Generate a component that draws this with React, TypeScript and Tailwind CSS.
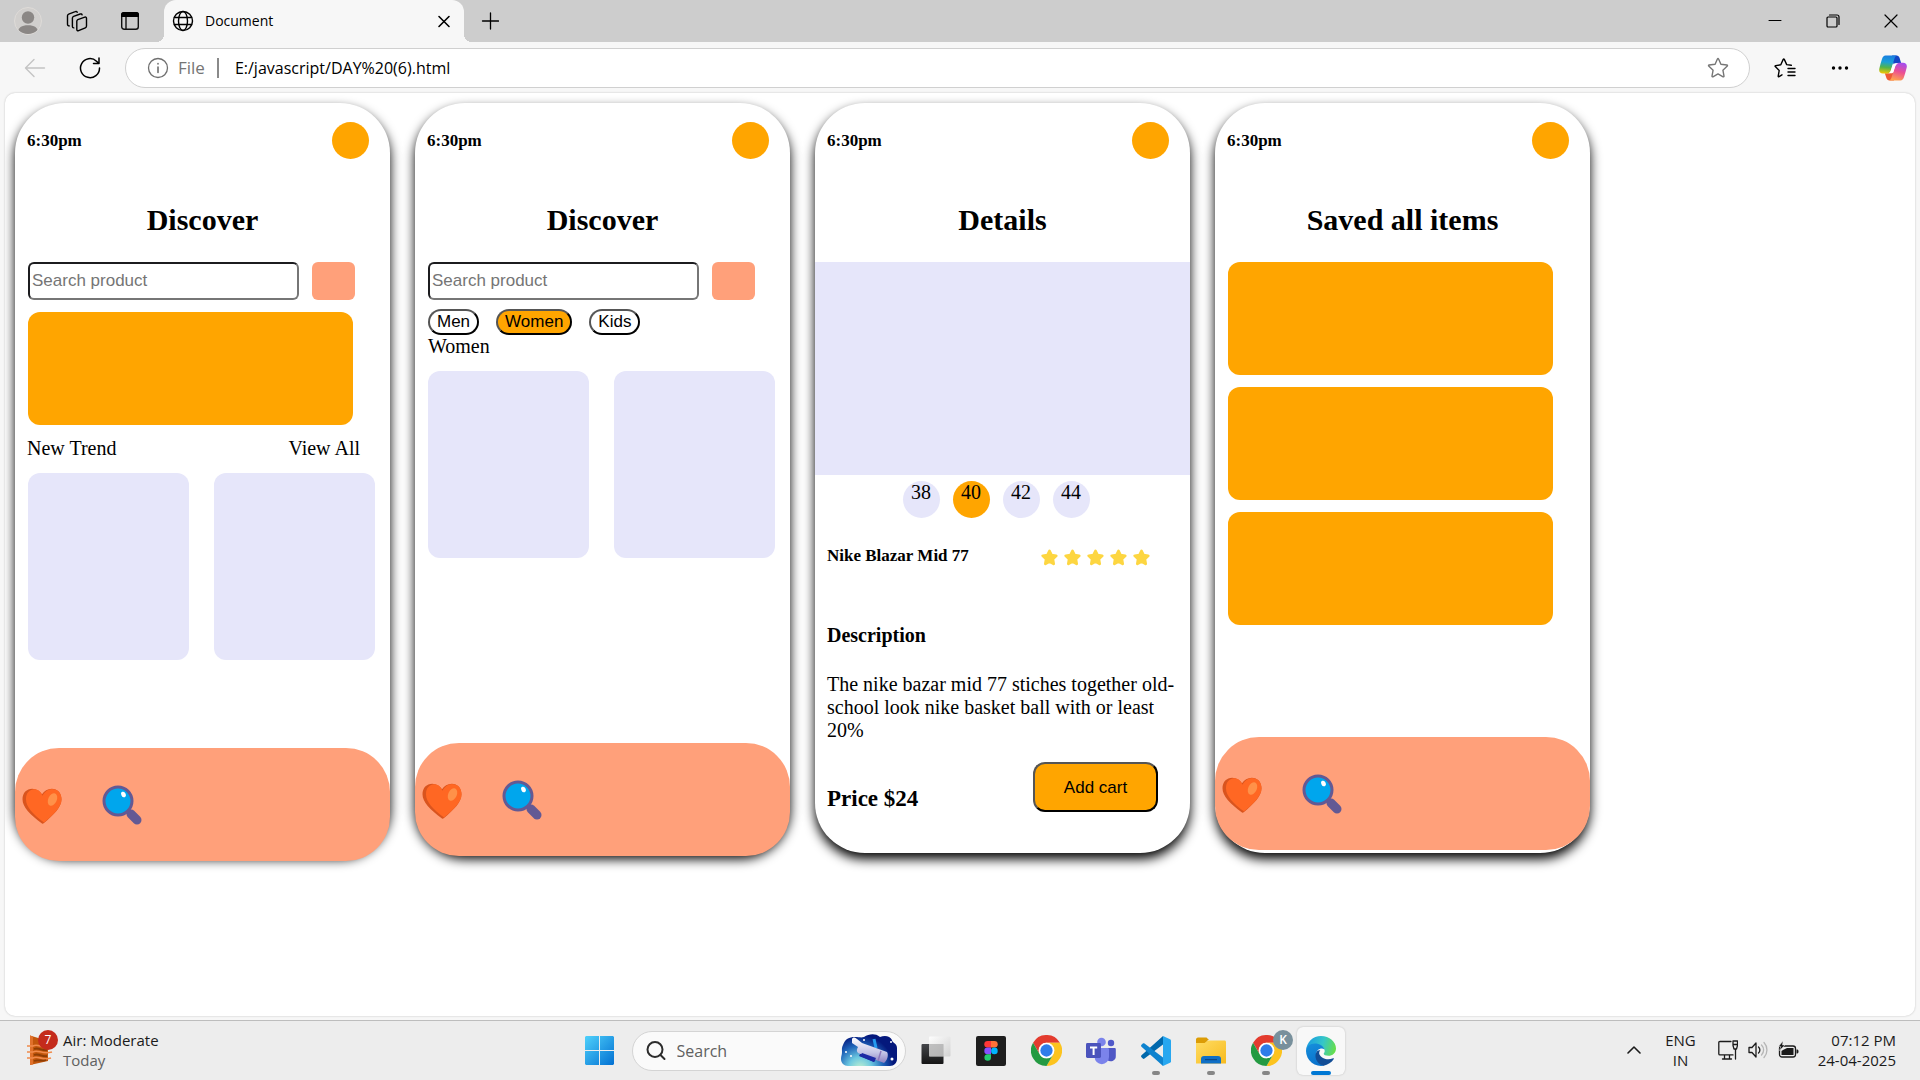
import React from "react";

const UI = "font-['Open_Sans',sans-serif]";

/* ---------- browser icons ---------- */

const stroke = { fill: "none", stroke: "currentColor", strokeLinecap: "round", strokeLinejoin: "round" } as const;

function Avatar() {
  return (
    <svg viewBox="0 0 28 28" className="size-7">
      <defs>
        <clipPath id="avatarClip"><circle cx="14" cy="14" r="13" /></clipPath>
      </defs>
      <circle cx="14" cy="14" r="13.5" fill="#d1cfcd" stroke="#dedbd8" />
      <g clipPath="url(#avatarClip)" fill="#8b8785">
        <circle cx="14" cy="10.5" r="6.2" />
        <path d="M3.8 26c0-5.500 4-7.800 10.200-7.800s10.200 2.300 10.200 7.800v3H3.800z" />
      </g>
    </svg>
  );
}

function Workspaces() {
  return (
    <svg viewBox="0 0 22 22" className="size-[22px]" {...stroke} strokeWidth="1.4">
      <path d="M11.800 8.600l7-2.400c1.100-.4 1.700.1 1.700 1.100v7.700c0 .9-.4 1.500-1.200 1.800l-6.700 2.800c-1.100.4-1.800 0-1.800-1.100v-8.200c0-.9.300-1.400 1-1.700z" transform="translate(0 1)" />
      <path d="M7.800 17.900c-.9 0-1.400-.4-1.400-1.400V8.100c0-.9.400-1.400 1.200-1.700l6.600-2.400c.9-.3 1.700 0 1.900.8" />
      <path d="M3.300 15.900c-1.100 0-1.800-.5-1.800-1.600V5.800c0-.9.400-1.400 1.200-1.700l6.500-2.400c1-.4 1.700-.1 2 .6" />
    </svg>
  );
}

function TabActions() {
  return (
    <svg viewBox="0 0 20 20" className="size-5">
      <rect x="1.700" y="1.700" width="16.600" height="16.600" rx="2.500" fill="none" stroke="#111" strokeWidth="1.400" />
      <path d="M1 6V3.500A2.500 2.500 0 0 1 3.500 1h13A2.500 2.500 0 0 1 19 3.500V6z" fill="#000" />
      <path d="M6 6v12" stroke="#111" strokeWidth="1.400" />
    </svg>
  );
}

function Globe() {
  return (
    <svg viewBox="0 0 22 22" className="size-[22px]" {...stroke} strokeWidth="1.400">
      <circle cx="11" cy="11" r="9.500" />
      <ellipse cx="11" cy="11" rx="4.500" ry="9.500" />
      <path d="M2.500 7.500h17M2.500 14.500h17" />
    </svg>
  );
}

function StarOutline({ lines = false }: { lines?: boolean }) {
  return (
    <svg viewBox="0 0 22 22" className="size-[22px]" {...stroke} strokeWidth="1.400">
      {lines ? (
        <>
          <path d="M8 17.800l-3 1.900c-.5.300-.9 0-.8-.6l1-5.600-3.900-3.900c-.4-.4-.2-.9.300-1l5.200-.8L9.200 2.400c.3-.5.900-.5 1.100 0l2.400 5.200 4.600.7" />
          <path d="M14 11.500h7M14 15h7M14 18.500h7" />
        </>
      ) : (
        <path d="M10.500 1.800c.2-.5.800-.5 1 0l2.400 5.400 6 .8c.6.100.8.700.4 1.100l-4.400 4.100 1.100 5.900c.1.600-.4.900-.9.700L11 16.900l-5.100 2.900c-.5.200-1-.1-.9-.7l1.100-5.900L1.700 9.100c-.4-.4-.2-1 .4-1.100l6-.8z" />
      )}
    </svg>
  );
}

function Copilot() {
  return (
    <svg viewBox="0 0 28 26" className="h-[26px] w-7">
      <defs>
        <linearGradient id="cpA" x1="0.300" y1="0" x2="0.200" y2="1">
          <stop offset="0" stopColor="#1a7fe0" /><stop offset=".35" stopColor="#1aa0d8" />
          <stop offset=".65" stopColor="#52b44b" /><stop offset="1" stopColor="#f8c700" />
        </linearGradient>
        <linearGradient id="cpB" x1="0.700" y1="0" x2="0.400" y2="1">
          <stop offset="0" stopColor="#a34df0" /><stop offset=".5" stopColor="#ec4f93" /><stop offset="1" stopColor="#ffa34d" />
        </linearGradient>
      </defs>
      <path d="M13 .5h4.500c1.700 0 2.600 1 3.100 2.500l1.600 5.200h-4c-2 0-3 .9-3.600 2.600z" fill="#1346c4" />
      <path d="M15 25.500h-4.500c-1.700 0-2.600-1-3.100-2.500l-1.600-4.800h4.400c2 0 3-.9 3.600-2.600z" fill="#ee5a35" />
      <path d="M6.500.5h11.800c-1.600.2-2.300 1.400-2.900 3.300l-3.600 11.600c-.6 2-1.800 3.100-4 3.100H4c-3 0-4.300-2-3.700-4.800C1 10.500 2 7 3 4 3.700 1.700 4.800.5 6.500.5z" fill="url(#cpA)" />
      <path d="M21.500 25.500H9.700c1.600-.2 2.300-1.400 2.900-3.300l3.600-11.400c.6-2 1.800-3.100 4-3.100H24c3 0 4.300 2 3.700 4.800-.7 3.200-1.700 6.500-2.700 9.500-.7 2.300-1.800 3.500-3.500 3.500z" fill="url(#cpB)" />
      <path d="M16.200 8.200h3.300c-1.700.5-2.700 1.600-3.300 3.400l-1.700 5.200c-.4 1-1.200 1.500-2.400 1.500H9.500c1.300-.5 2-1.400 2.400-2.700l1.700-5.300c.5-1.400 1.300-2.100 2.600-2.100z" fill="#fff" />
    </svg>
  );
}

/* ---------- content icons ---------- */

function Heart() {
  return (
    <svg viewBox="0 0 40 36" className="h-9 w-10">
      <path d="M20 35.500C8 26.500.5 19 .5 11.200.5 4.800 4.700.7 10.200.7c4.200 0 7.600 2.100 9.800 5.500C22.200 2.800 25.600.7 29.800.7c5.500 0 9.700 4.100 9.700 10.500C39.500 19 32 26.500 22 35c-.7.600-1.300.9-2 .5z" fill="#d9541e" />
      <path d="M22 34.500C11 26 4 19 4 11.200 4 5.200 7 1.700 12 1.200c3.800 0 6.500 2 8.600 6.500 2.100-3.900 5-6.500 9.400-6.700 5.500 0 9.500 3.900 9.500 10.200C39.500 19 32 26 22 34.500z" fill="#ff6723" />
      <ellipse cx="30.500" cy="11.500" rx="4.300" ry="6.500" transform="rotate(25 30.500 11.500)" fill="#ff9149" />
    </svg>
  );
}

function Magnifier() {
  return (
    <svg viewBox="0 0 40 40" className="size-10">
      <path d="M25.500 25.500l4 4" stroke="#635994" strokeWidth="4" />
      <path d="M29 29l6 6" stroke="#635994" strokeWidth="9" strokeLinecap="round" />
      <circle cx="16" cy="16" r="14" fill="#00a6ed" stroke="#635994" strokeWidth="3" />
      <ellipse cx="21.500" cy="9.500" rx="2.200" ry="2.900" transform="rotate(-25 21.500 9.500)" fill="#fff" />
    </svg>
  );
}

function RatingStar() {
  return (
    <svg viewBox="0 0 17 17" className="size-[17px]">
      <path d="M8.500 2l2 4.200 4.700.6-3.400 3.300.8 4.700-4.100-2.200-4.100 2.200.8-4.700L1.800 6.800l4.700-.6z" fill="#fdd641" stroke="#fdd641" strokeWidth="2.800" strokeLinejoin="round" />
    </svg>
  );
}

/* ---------- taskbar icons ---------- */

function WindowsLogo() {
  return (
    <svg viewBox="0 0 29 29" className="size-[29px]">
      <defs>
        <linearGradient id="win" gradientUnits="userSpaceOnUse" x1="0" y1="0" x2="29" y2="29">
          <stop offset="0" stopColor="#4fd1fb" /><stop offset="1" stopColor="#0270d2" />
        </linearGradient>
      </defs>
      <path d="M1 0h13v14H0V1zM15 0h13l1 1v13H15zM0 15h14v14H1l-1-1zM15 15h14v13l-1 1H15z" fill="url(#win)" />
    </svg>
  );
}

function SearchArt() {
  return (
    <svg viewBox="0 0 58 33" className="h-[33px] w-[58px]">
      <defs>
        <radialGradient id="sky" gradientUnits="userSpaceOnUse" cx="20" cy="35" r="34">
          <stop offset="0" stopColor="#c5f3cf" /><stop offset=".35" stopColor="#6cc8e0" />
          <stop offset=".7" stopColor="#1d62b8" /><stop offset="1" stopColor="#04187c" />
        </radialGradient>
        <linearGradient id="tube" x1="0" y1="0" x2="0" y2="1">
          <stop offset="0" stopColor="#fff" /><stop offset=".6" stopColor="#c3c4e6" /><stop offset="1" stopColor="#8c7fc0" />
        </linearGradient>
      </defs>
      <path d="M3 11C5 5 9 3 15 3c4 0 6 1 9 0 5-3 11-4 16 0 5-2 10-1 12 3 0 3 5 3 5 8v11c0 4-3 7-7 7H8c-4 0-7-3-7-7 0-3 1-4 1-7 0-2-.500-4 1-7z" fill="url(#sky)" />
      <path d="M21 18l16 6-3 4-15-6z" fill="#1a2a9c" />
      <path d="M34 5l2 9" stroke="#249bf0" strokeWidth="3" />
      <path d="M12 5c1-2 3-2 5 0l5 4 25 9c2 3 0 9-3 11l-26-10c-2-2-1-4 0-6l-6-4z" fill="url(#tube)" />
      <path d="M41 17l-3 10" stroke="#8d78bb" strokeWidth="1.500" />
      <path d="M22 19l14 5-2 4-14-6z" fill="#1d2aa5" />
      <g fill="#fff"><circle cx="6" cy="18" r="1" /><circle cx="24" cy="6" r="1" /><circle cx="51" cy="8" r="1" /><circle cx="52" cy="25" r="1.500" /><circle cx="11" cy="22" r="1" /></g>
    </svg>
  );
}

function TaskView() {
  return (
    <svg viewBox="0 0 30 29" className="h-[29px] w-[30px]">
      <defs>
        <linearGradient id="tvDark" x1="0" y1="0" x2="0" y2="1"><stop offset="0" stopColor="#44464a" /><stop offset="1" stopColor="#151515" /></linearGradient>
        <linearGradient id="tvLight" x1="0" y1="0" x2="1" y2="1"><stop offset="0" stopColor="#fff" /><stop offset="1" stopColor="#cfcfcf" /></linearGradient>
      </defs>
      <rect x="0.500" y="8" width="22" height="20" rx="1" fill="url(#tvDark)" />
      <rect x="8" y="0.500" width="21.500" height="20" rx="1" fill="url(#tvLight)" fillOpacity=".9" />
      <path d="M8 8h14.500v12.500H8z" fill="#a9a9a9" fillOpacity=".6" />
    </svg>
  );
}

function Figma() {
  return (
    <svg viewBox="0 0 30 30" className="size-[30px]">
      <rect width="30" height="30" rx="2" fill="#1e1e1e" />
      <path d="M15 5h-3.400a3.300 3.300 0 0 0 0 6.600H15z" fill="#ff3737" />
      <path d="M15 5h3.400a3.300 3.300 0 0 1 0 6.600H15z" fill="#ff7237" />
      <path d="M15 11.600h-3.400a3.300 3.300 0 0 0 0 6.600H15z" fill="#874fff" />
      <circle cx="18.400" cy="14.900" r="3.300" fill="#00b6ff" />
      <path d="M15 18.200h-3.400a3.300 3.300 0 1 0 3.400 3.300z" fill="#24cb71" />
    </svg>
  );
}

function Chrome() {
  return (
    <svg viewBox="0 0 48 48" className="size-[31px]">
      <path d="M3.200 12A24 24 0 0 1 44.800 12H24a12 12 0 0 0-10.400 18z" fill="#e33b2e" />
      <path d="M44.800 12A24 24 0 0 1 24 48l10.400-18A12 12 0 0 0 24 12z" fill="#fcc31e" />
      <path d="M24 48A24 24 0 0 1 3.200 12l10.400 18A12 12 0 0 0 34.400 30z" fill="#249a42" />
      <circle cx="24" cy="24" r="12" fill="#fff" />
      <circle cx="24" cy="24" r="9.500" fill="#2f7de9" />
    </svg>
  );
}

function Teams() {
  return (
    <svg viewBox="0 0 30 28" className="h-7 w-[30px]">
      <circle cx="15.500" cy="5" r="4.300" fill="#7b83eb" />
      <circle cx="25" cy="6" r="3.200" fill="#5059c9" />
      <path d="M21 11h7.500c.8 0 1.300.5 1.300 1.300v6.700a5 5 0 0 1-8.800 3.500z" fill="#4f57c5" />
      <path d="M10 11h11.500c.8 0 1.500.6 1.500 1.400V20a7.200 7.200 0 0 1-14.400 0v-7.500z" fill="#7b83eb" />
      <rect y="6" width="15" height="15" rx="1.400" fill="#4b53bc" />
      <path d="M4 9.500h7.200v1.900H8.600V18h-2v-6.600H4z" fill="#fff" />
    </svg>
  );
}

function VsCode() {
  return (
    <svg viewBox="0 0 30 30" className="size-[30px]">
      <path d="M22 0l7 3.200c.6.300 1 .8 1 1.600v20.400c0 .8-.4 1.300-1 1.600L22 30z" fill="#27a7f0" />
      <path d="M22 0v8.500L3.500 22.500c-.6.500-1.200.5-1.700 0L.5 21.200c-.6-.6-.6-1.300 0-1.900z" fill="#0068ac" />
      <path d="M22 30v-8.500L3.500 7.500c-.6-.5-1.200-.5-1.700 0L.5 8.800c-.6.600-.6 1.300 0 1.900z" fill="#0e83cf" />
    </svg>
  );
}

function Folder() {
  return (
    <svg viewBox="0 0 30 27" className="h-[27px] w-[30px]">
      <defs>
        <linearGradient id="fold" x1="0" y1="0" x2="1" y2="1"><stop offset="0" stopColor="#ffdc62" /><stop offset="1" stopColor="#f7bb1f" /></linearGradient>
      </defs>
      <path d="M0 2.500C0 1.500.8.500 2 .5h8.500L13 3h-1L8 8H0z" fill="#dc9c05" />
      <path d="M0 6h8.500L12 3.500h16.500c.9 0 1.500.6 1.500 1.500v21.500H0z" fill="url(#fold)" />
      <path d="M5 26.500V22c0-2 1-3 3-3h14c2 0 3 1 3 3v4.500z" fill="#0f6fc6" />
      <path d="M9 22.700h12" stroke="#0b3f7c" />
    </svg>
  );
}

function Edge() {
  return (
    <svg viewBox="0 0 30 30" className="size-[30px]">
      <defs>
        <linearGradient id="edgeTop" x1="0" y1="0.300" x2="1" y2="0.500"><stop offset="0" stopColor="#199be2" /><stop offset=".55" stopColor="#35c6c9" /><stop offset="1" stopColor="#66de4c" /></linearGradient>
        <linearGradient id="edgeL" x1="0" y1="0" x2="0.300" y2="1"><stop offset="0" stopColor="#1790dc" /><stop offset="1" stopColor="#0a72cc" /></linearGradient>
      </defs>
      <path d="M0 14.500C.6 6 7 0 15 0c8.500 0 15 6 15 12.500 0 4.500-3.500 7.300-7.500 7.300-3 0-4.800-.9-4.800-2 0-.8 1-1.200 1-2.800 0-3.500-4-6.500-9-6.500-5 0-8.700 2.500-9.700 6z" fill="url(#edgeTop)" />
      <path d="M0 15c0-4.500 4-7.500 9-7.500 4.500 0 8.500 2.500 9.500 6-2-1.500-4.800-1-6.500.5-2 2-2.500 5-1.500 8 1.200 3.600 4 6.500 8 7.500A15 15 0 0 1 0 15z" fill="url(#edgeL)" />
      <path d="M11.300 15c-4 4-1.300 13 6.200 14.700 4.500-.7 8-3.300 10.300-6.700.3-.5-.1-.9-.7-.7-5 2.200-11.600.6-13.600-3.800-.6-1.500-.3-3.200.8-4.300-1.200-.2-2.200.1-3 .8z" fill="#124d96" />
    </svg>
  );
}

function AirIcon() {
  return (
    <svg viewBox="0 0 26 30" className="h-[30px] w-[26px]">
      <path d="M3 .5L21 6v20L3 30z" fill="#c2570c" />
      <path d="M3 .5l3 1v28l-3 .5z" fill="#e0702a" />
      <g fill="none" stroke="#f08a4b" strokeWidth="1.600">
        <path d="M0 11h6c5-3 9 3 18 0M0 17h6c5-3 9 3 19 0M0 23h6c5-3 9 3 18 0" />
      </g>
      <path d="M7 14c5-2 8 2 13 1M7 20c5-2 8 2 13 1M7 26c4-2 8 1 12-1" fill="none" stroke="#8d3d05" strokeWidth="1.800" />
    </svg>
  );
}

/* ---------- phone mock-ups ---------- */

function Phone({ title, children }: { title: string; children: React.ReactNode }) {
  return (
    <section className="h-[750px] w-[375px] shrink-0 rounded-[50px] bg-white shadow-[0_6px_12px_#000]">
      <header className="flex items-center justify-between pt-[19px] pr-[21px] pl-3">
        <h5 className="text-[17px] leading-5 font-bold">6:30pm</h5>
        <div className="size-[37px] rounded-full bg-[#ffa500]" />
      </header>
      <h2 className="mt-[43px] text-center text-[30px] leading-9 font-bold">{title}</h2>
      <div className="pt-6">{children}</div>
    </section>
  );
}

function SearchRow() {
  return (
    <div className="flex gap-[13px] pl-[13px]">
      <input
        type="text"
        aria-label="Search product"
        placeholder="Search product"
        className="h-[38px] w-[271px] rounded-md border-2 border-t-[#1c1c1f] border-r-[#767676] border-b-[#767676] border-l-[#1c1c1f] bg-white px-0.5 font-['Liberation_Sans',sans-serif] text-[17px] placeholder:text-[#757575]"
      />
      <div className="h-[38px] w-[43px] rounded-md bg-[#ffa07a]" />
    </div>
  );
}

const Banner = () => <div className="h-[113px] w-[325px] rounded-xl bg-[#ffa500]" />;

function Cards() {
  return (
    <div className="flex gap-[25px] pl-[13px]">
      <div className="h-[187px] w-[161px] rounded-xl bg-[#e6e6fa]" />
      <div className="h-[187px] w-[161px] rounded-xl bg-[#e6e6fa]" />
    </div>
  );
}

function BottomBar({ className }: { className: string }) {
  return (
    <nav className={`flex h-[113px] items-center gap-10 rounded-[44px] bg-[#ffa07a] pl-[7px] ${className}`}>
      <button type="button" aria-label="Favourites" className="pt-0.5"><Heart /></button>
      <button type="button" aria-label="Search"><Magnifier /></button>
    </nav>
  );
}

const BEVEL = "border-2 border-t-[#555] border-r-black border-b-black border-l-[#555]";

function Chip({ label, active = false }: { label: string; active?: boolean }) {
  return (
    <button
      type="button"
      className={`h-[26px] rounded-[13px] px-[7px] font-['Liberation_Sans',sans-serif] text-[17px] leading-5 ${BEVEL} ${active ? "bg-[#ffa500]" : "bg-white"}`}
    >
      {label}
    </button>
  );
}

function TaskButton({ label, children, running = false, active = false }: { label: string; children: React.ReactNode; running?: boolean; active?: boolean }) {
  return (
    <button type="button" aria-label={label} className="flex w-[55px] justify-center">
      <span className={`relative flex size-12 items-center justify-center rounded-md ${active ? "bg-[#f8f8f8] shadow-[0_0_2px_#bbb]" : ""}`}>
        {children}
        {running && <span className="absolute bottom-0 h-1 w-2 rounded-full bg-[#868686]" />}
        {active && <span className="absolute bottom-0 h-1 w-5 rounded-full bg-[#0078d4]" />}
      </span>
    </button>
  );
}

export default function App() {
  return (
    <div className={`flex min-h-screen flex-col bg-[#f7f7f7] text-black ${UI}`}>
      {/* tab strip */}
      <div className="flex h-[42px] bg-[#cdcdcd]">
        <div className="flex w-[164px] items-center gap-6 pl-[14px]">
          <button type="button" aria-label="Profile"><Avatar /></button>
          <button type="button" aria-label="Workspaces"><Workspaces /></button>
          <button type="button" aria-label="Tab actions" className="pl-2"><TabActions /></button>
        </div>
        <div className="relative flex w-[300px] items-center rounded-t-xl bg-[#f7f7f7] pr-3 pl-2">
          <span className="absolute bottom-0 -left-2 size-2 bg-[radial-gradient(circle_at_0_0,#cdcdcd_8px,#f7f7f7_8px)]" />
          <span className="absolute -right-2 bottom-0 size-2 bg-[radial-gradient(circle_at_100%_0,#cdcdcd_8px,#f7f7f7_8px)]" />
          <Globe />
          <span className="ml-[11px] flex-1 pb-0.5 text-[14px]">Document</span>
          <button type="button" aria-label="Close tab">
            <svg viewBox="0 0 16 16" className="size-4" {...stroke} strokeWidth="1.600"><path d="M3 3.500l10 10M13 3.500l-10 10" /></svg>
          </button>
        </div>
        <button type="button" aria-label="New tab" className="ml-[17px]">
          <svg viewBox="0 0 18 18" className="size-[18px]" {...stroke} strokeWidth="1.300"><path d="M9.500 1v16M1.500 9h16" /></svg>
        </button>
        <div className="ml-auto flex">
          <button type="button" aria-label="Minimise" className="flex w-[58px] items-center justify-center">
            <svg viewBox="0 0 14 14" className="size-3.5" {...stroke}><path d="M1 6.500h12" /></svg>
          </button>
          <button type="button" aria-label="Restore" className="flex w-[58px] items-center justify-center">
            <svg viewBox="0 0 14 14" className="size-3.5" {...stroke} strokeWidth="1.200"><rect x="1" y="3" width="10" height="10" rx="1" /><path d="M3.500 1H11c1.200 0 2 .8 2 2v7.500" /></svg>
          </button>
          <button type="button" aria-label="Close" className="flex w-[58px] items-center justify-center">
            <svg viewBox="0 0 14 14" className="size-3.5" {...stroke} strokeWidth="1.200"><path d="M1 1l12 12M13 1L1 13" /></svg>
          </button>
        </div>
      </div>

      {/* toolbar */}
      <div className="flex h-[51px] items-center pt-px pr-[13px] pl-6">
        <button type="button" aria-label="Back" className="text-[#c4c4c4]">
          <svg viewBox="0 0 22 22" className="size-[22px]" {...stroke} strokeWidth="1.400"><path d="M20.500 11H2M10 2.500L1.500 11l8.500 8.500" /></svg>
        </button>
        <button type="button" aria-label="Refresh" className="ml-[33px]">
          <svg viewBox="0 0 22 22" className="size-[22px]" {...stroke} strokeWidth="1.500"><path d="M20.500 11A9.500 9.500 0 1 1 17.500 4.200L20 6.500M20 1v5.500h-5.500" /></svg>
        </button>
        <div className="ml-6 flex h-10 flex-1 items-center rounded-full border border-[#d0d0d0] bg-white pr-5 pl-[21px]">
          <svg viewBox="0 0 22 22" className="size-[22px] text-[#6f6f6f]" {...stroke} strokeWidth="1.300">
            <circle cx="11" cy="11" r="9.500" /><path d="M11 10v5.500M11 6.500v.4" strokeWidth="1.600" />
          </svg>
          <span className="ml-[9px] text-[17px] text-[#757575]">File</span>
          <span className="ml-3 h-5 w-0.5 bg-[#8a8a8a]" />
          <input aria-label="Address" defaultValue="E:/javascript/DAY%20(6).html" className="ml-4 min-w-0 flex-1 bg-transparent text-[16px] outline-none" />
          <button type="button" aria-label="Add to favourites" className="text-[#767676]"><StarOutline /></button>
        </div>
        <button type="button" aria-label="Favourites" className="ml-6"><StarOutline lines /></button>
        <button type="button" aria-label="Settings and more" className="ml-[34px]">
          <svg viewBox="0 0 20 20" className="size-5"><circle cx="3.500" cy="10" r="1.700" /><circle cx="10" cy="10" r="1.700" /><circle cx="16.500" cy="10" r="1.700" /></svg>
        </button>
        <button type="button" aria-label="Copilot" className="ml-[29px]"><Copilot /></button>
      </div>

      {/* page */}
      <main className="mx-[5px] mb-1 flex-1 overflow-hidden rounded-[10px] bg-white pt-[10px] pl-[10px] font-['Liberation_Serif',serif] text-[20px] leading-[23px] shadow-[0_0_2px_#bbb]">
        <div className="flex gap-[25px]">
          <Phone title="Discover">
            <SearchRow />
            <div className="pt-3 pl-[13px]"><Banner /></div>
            <div className="mt-3 flex justify-between pr-[30px] pl-3"><p>New Trend</p><a href="#all">View All</a></div>
            <div className="pt-[13px]"><Cards /></div>
            <BottomBar className="mt-[88px]" />
          </Phone>

          <Phone title="Discover">
            <SearchRow />
            <div className="flex gap-[17px] pt-[9px] pl-[13px]">
              <Chip label="Men" /><Chip label="Women" active /><Chip label="Kids" />
            </div>
            <p className="pl-[13px]">Women</p>
            <div className="pt-[13px]"><Cards /></div>
            <BottomBar className="mt-[185px]" />
          </Phone>

          <Phone title="Details">
            <div className="h-[213px] bg-[#e6e6fa]" />
            <div className="flex justify-center gap-[13px] pt-1.5 pr-[13px]">
              {["38", "40", "42", "44"].map((size) => (
                <button type="button" key={size} className={`flex size-[37px] justify-center rounded-full ${size === "40" ? "bg-[#ffa500]" : "bg-[#e6e6fa]"}`}>{size}</button>
              ))}
            </div>
            <div className="mt-7 flex items-start justify-between pr-[40px] pl-3">
              <h5 className="text-[17px] leading-5 font-bold">Nike Blazar Mid 77</h5>
              <div className="flex gap-1.5 pt-[3px]">
                {[1, 2, 3, 4, 5].map((n) => <RatingStar key={n} />)}
              </div>
            </div>
            <h4 className="mt-[58px] pl-3 font-bold">Description</h4>
            <p className="mt-[26px] pr-3 pl-3">The nike bazar mid 77 stiches together old-school look nike basket ball with or least 20%</p>
            <div className="mt-5 flex items-end justify-between pr-8 pl-3">
              <h3 className="text-[23px] leading-[26px] font-bold">Price $24</h3>
              <button type="button" className={`h-[50px] w-[125px] rounded-xl bg-[#ffa500] font-['Liberation_Sans',sans-serif] text-[17px] ${BEVEL}`}>Add cart</button>
            </div>
          </Phone>

          <Phone title="Saved all items">
            <div className="flex flex-col gap-3 pl-[13px]"><Banner /><Banner /><Banner /></div>
            <BottomBar className="mt-[112px]" />
          </Phone>
        </div>
      </main>

      {/* taskbar */}
      <footer className="grid h-[60px] grid-cols-[1fr_auto_1fr] items-center border-t border-[#bdbdbd] bg-[#ededed]">
        <button type="button" className="flex items-center pb-0.5 pl-[27px] text-left">
          <span className="relative pr-[10px]">
            <AirIcon />
            <span className="absolute -top-[5px] left-[11px] flex size-5 items-center justify-center rounded-full bg-[#c42b1c] text-[12px] text-white">7</span>
          </span>
          <span className="flex flex-col text-[15px] leading-5">
            <span className="text-[#1b1b1b]">Air: Moderate</span>
            <span className="text-[#606060]">Today</span>
          </span>
        </button>
        <div className="flex items-center">
          <TaskButton label="Start"><WindowsLogo /></TaskButton>
          <label className="mr-[3px] ml-[5px] flex h-10 w-[274px] items-center rounded-full border border-[#d4d4d4] bg-[#fafafa] pr-[7px] pl-3">
            <svg viewBox="0 0 22 22" className="size-[22px] text-[#2c2c2c]" {...stroke} strokeWidth="2"><circle cx="10" cy="9.500" r="7.500" /><path d="M15.500 15l4 4" /></svg>
            <input type="search" aria-label="Search" placeholder="Search" className="ml-[10px] min-w-0 flex-1 bg-transparent text-[16px] outline-none placeholder:text-[#606060]" />
            <SearchArt />
          </label>
          <TaskButton label="Task view"><TaskView /></TaskButton>
          <TaskButton label="Figma"><Figma /></TaskButton>
          <TaskButton label="Chrome"><Chrome /></TaskButton>
          <TaskButton label="Teams"><Teams /></TaskButton>
          <TaskButton label="Code editor" running><VsCode /></TaskButton>
          <TaskButton label="Files" running><Folder /></TaskButton>
          <TaskButton label="Chrome, profile K" running>
            <Chrome />
            <span className="absolute top-[3px] -right-[3px] flex size-5 items-center justify-center rounded-full bg-[#78909c] text-[12px] font-semibold text-white">K</span>
          </TaskButton>
          <TaskButton label="Edge" active><Edge /></TaskButton>
        </div>
        <div className="flex items-center justify-end pr-6 pb-0.5 text-[15px] leading-5 text-[#1b1b1b]">
          <button type="button" aria-label="Hidden icons" className="mr-6">
            <svg viewBox="0 0 14 14" className="size-3.5" {...stroke} strokeWidth="1.600"><path d="M1 10l6-6 6 6" /></svg>
          </button>
          <span className="mr-[22px] text-center">ENG<br />IN</span>
          <svg viewBox="0 0 20 20" className="size-5" {...stroke} strokeWidth="1.300">
            <path d="M13 1.500H2c-.8 0-1.200.4-1.200 1.200v11c0 .8.400 1.200 1.200 1.200h13M6.500 15v3.500M11.500 15v3.500M4.500 19h9M17.500 9v10M15 1h4.500v4.500L18.500 9h-2.500L15 5.500zM15 4.500h4" />
          </svg>
          <svg viewBox="0 0 20 20" className="ml-[10px] size-5" {...stroke} strokeWidth="1.300">
            <path d="M1 7.500h3l4-4.500v14l-4-4.500H1zM10.500 7a4 4 0 0 1 0 6" />
            <path d="M13.500 5a7 7 0 0 1 0 10M16 2.500a11 11 0 0 1 0 15" stroke="#b5b5b5" />
          </svg>
          <svg viewBox="0 0 21 18" className="ml-[10px] h-[18px] w-[21px]">
            <rect x="1.500" y="5" width="16" height="11" rx="2.500" fill="none" stroke="#1b1b1b" strokeWidth="1.300" />
            <path d="M5 9l4-2h6.500v7H3.500v-4zM18.500 8.500c1.500 0 2 .5 2 2s-.5 2-2 2z" fill="#1b1b1b" />
            <path d="M5 0L.5 5.500h2.300L1.500 9.500 7 4H4.500z" fill="#1b1b1b" stroke="#ededed" strokeWidth=".5" />
          </svg>
          <time className="ml-[19px] text-right">07:12 PM<br />24-04-2025</time>
        </div>
      </footer>
    </div>
  );
}
